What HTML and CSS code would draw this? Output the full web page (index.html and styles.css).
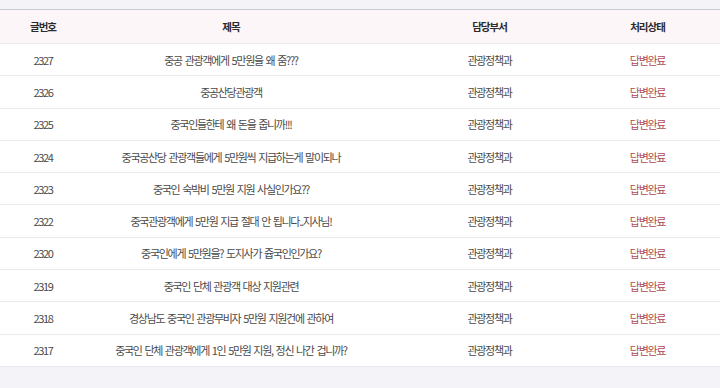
FILE: index.html
```html
<!DOCTYPE html>
<html lang="ko">
<head>
<meta charset="utf-8">
<title>민원 목록</title>
<link rel="stylesheet" href="styles.css">
</head>
<body>
<div class="page">
  <table class="board">
    <colgroup>
      <col class="c-no">
      <col class="c-title">
      <col class="c-dept">
      <col class="c-state">
    </colgroup>
    <thead>
      <tr>
        <th>글번호</th>
        <th>제목</th>
        <th class="dept">담당부서</th>
        <th>처리상태</th>
      </tr>
    </thead>
    <tbody>
      <tr><td>2327</td><td>중공 관광객에게 5만원을 왜 줌???</td><td class="dept">관광정책과</td><td class="state">답변완료</td></tr>
      <tr><td>2326</td><td>중공산당관광객</td><td class="dept">관광정책과</td><td class="state">답변완료</td></tr>
      <tr><td>2325</td><td>중국인들한테 왜 돈을 줍니까!!!</td><td class="dept">관광정책과</td><td class="state">답변완료</td></tr>
      <tr><td>2324</td><td>중국공산당 관광객들에게 5만원씩 지급하는게 말이되나</td><td class="dept">관광정책과</td><td class="state">답변완료</td></tr>
      <tr><td>2323</td><td>중국인 숙박비 5만원 지원 사실인가요??</td><td class="dept">관광정책과</td><td class="state">답변완료</td></tr>
      <tr><td>2322</td><td>중국관광객에게 5만원 지급 절대 안 됩니다..지사님!</td><td class="dept">관광정책과</td><td class="state">답변완료</td></tr>
      <tr><td>2320</td><td>중국인에게 5만원을? 도지사가 쥽국인인가요?</td><td class="dept">관광정책과</td><td class="state">답변완료</td></tr>
      <tr><td>2319</td><td>중국인 단체 관광객 대상 지원관련</td><td class="dept">관광정책과</td><td class="state">답변완료</td></tr>
      <tr><td>2318</td><td>경상남도 중국인 관광무비자 5만원 지원건에 관하여</td><td class="dept">관광정책과</td><td class="state">답변완료</td></tr>
      <tr><td>2317</td><td>중국인 단체 관광객에게 1인 5만원 지원, 정신 나간 겁니까?</td><td class="dept">관광정책과</td><td class="state">답변완료</td></tr>
    </tbody>
  </table>
</div>
</body>
</html>
```
FILE: styles.css
```css
html, body {
  margin: 0;
  padding: 0;
  background: #f3f3f8;
}
body {
  font-family: "Noto Sans CJK KR", "Noto Sans", sans-serif;
  color: #4a4a4a;
}
.page {
  padding-top: 9px;
}
.board {
  width: 100%;
  border-collapse: collapse;
  table-layout: fixed;
  background: #fff;
  border-top: 1px solid #c9c9d2;
}
.c-no { width: 86px; }
.c-title { width: 290px; }
.c-dept { width: 199px; }
.c-state { width: 145px; }
.board th,
.board td {
  text-align: center;
  padding: 0;
  white-space: nowrap;
  overflow: hidden;
}
.board th {
  height: 33px;
  background: #fdf6f9;
  color: #2b2b2b;
  font-size: 10.5px;
  font-weight: 700;
  letter-spacing: -1px;
  border-bottom: 1px solid #ececf0;
}
.board td {
  height: 31.3px;
  font-size: 11px;
  letter-spacing: -1.3px;
  word-spacing: 1px;
  border-bottom: 1px solid #e9e9ee;
}
.board .dept {
  padding-left: 28px;
}
.board td.state {
  color: #b04a4e;
}
```
